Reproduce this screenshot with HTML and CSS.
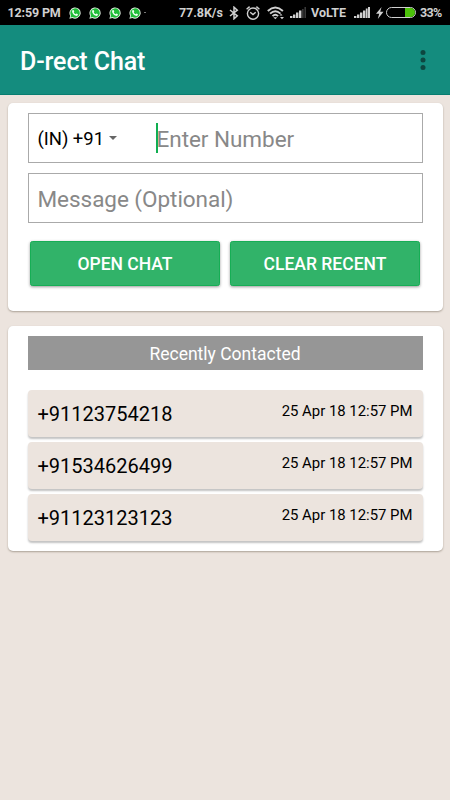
FILE: index.html
```html
<!DOCTYPE html>
<html lang="en">
<head>
<meta charset="utf-8">
<title>D-rect Chat</title>
<link rel="stylesheet" href="styles.css">
</head>
<body>
<svg class="defs" width="0" height="0">
  <defs>
    <symbol id="chat" viewBox="0 0 12 12">
      <path d="M.4 11.7 1.2 8.8A5.6 5.6 0 1 1 3.3 10.9Z" fill="#e2eee2"/>
      <path d="M1.5 10.6 2.1 8.5A4.7 4.7 0 1 1 3.6 10Z" fill="#20bd39"/>
      <path d="M3.7 3.1 4.6 3 5.3 4.7 4.7 5.5Q5.3 6.7 6.7 7.2L7.4 6.5 9 7.3Q8.9 8.8 7.5 9 4.7 8.7 3.2 5.3 2.8 4 3.7 3.1Z" fill="#f2fff2"/>
    </symbol>
    <symbol id="signal" viewBox="0 0 16 11">
      <path d="M0 9h2.4v2H0zM3 7.5h2.4V11H3zM6 5.5h2.4V11H6zM9 3.5h2.4V11H9z" fill="#d0d0d0"/>
    </symbol>
  </defs>
</svg>
<div class="status">
  <span class="clock">12:59 PM</span>
  <span class="notices">
    <svg><use href="#chat"/></svg><svg><use href="#chat"/></svg><svg><use href="#chat"/></svg><svg><use href="#chat"/></svg>
  </span>
  <i class="more-dot"></i>
  <span class="speed">77.8K/s</span>
  <svg class="bluetooth" viewBox="0 0 10 14"><path d="M1 4 8.3 9.8 5 12.8V1.2L8.3 4.2 1 10" fill="none" stroke="#d0d0d0" stroke-width="1.5"/></svg>
  <svg class="alarm" viewBox="0 0 14 14"><g fill="none" stroke="#d0d0d0" stroke-width="1.4"><circle cx="7" cy="7.6" r="5.6"/><path d="M.6 3.2 3.6.6M10.4.6 13.4 3.2M4.2 6.3 7 8.6 9.7 6.3"/></g></svg>
  <svg class="wifi" viewBox="0 0 18 14"><g fill="none" stroke="#d0d0d0" stroke-width="1.9"><path d="M.8 5Q8.3-1.8 15.9 5M3.1 7.6Q8.3 2.9 13.5 7.6M5.5 10.1Q8.3 7.4 11.1 10.1"/></g><path d="M6.3 11.2h4l-2 2zM12.5 9.6 14 7.7l1.5 1.9zM13 10.9h4L15 13.2z" fill="#d0d0d0"/></svg>
  <svg class="signal" viewBox="0 0 16 11"><use href="#signal" width="16" height="11"/><path d="M12 2h1.7v9H12zM14.4 0H16v11h-1.6z" fill="#383838"/></svg>
  <span class="volte">VoLTE</span>
  <svg class="signal" viewBox="0 0 16 11"><use href="#signal" width="16" height="11"/><path d="M11.8 1.5h1.8V11h-1.8zM14 0h2v11h-2z" fill="#d0d0d0"/></svg>
  <svg class="bolt" viewBox="0 0 8 12"><path d="M5.6 0 0 6.7h3.2L1.8 12 7.5 4.7H4.2z" fill="#d0d0d0"/></svg>
  <span class="battery"><i></i></span>
  <span class="percent">33%</span>
</div>
<header class="toolbar">
  <h1>D-rect Chat</h1>
  <svg class="menu" viewBox="0 0 6 20"><g fill="#0d4740"><circle cx="3" cy="2.5" r="2.5"/><circle cx="3" cy="10" r="2.5"/><circle cx="3" cy="17.5" r="2.5"/></g></svg>
</header>
<main>
  <section class="card compose">
    <div class="field">
      <span class="code">(IN) +91</span>
      <i class="arrow"></i>
      <i class="caret"></i>
      <span class="hint">Enter Number</span>
    </div>
    <div class="field"><span class="hint">Message (Optional)</span></div>
    <div class="actions">
      <button>OPEN CHAT</button>
      <button>CLEAR RECENT</button>
    </div>
  </section>
  <section class="card recent">
    <h2>Recently Contacted</h2>
    <ul>
      <li><span>+91123754218</span><time>25 Apr 18 12:57 PM</time></li>
      <li><span>+91534626499</span><time>25 Apr 18 12:57 PM</time></li>
      <li><span>+91123123123</span><time>25 Apr 18 12:57 PM</time></li>
    </ul>
  </section>
</main>
</body>
</html>
```
FILE: styles.css
```css
* { box-sizing: border-box; }
body {
  margin: 0;
  height: 800px;
  overflow: hidden;
  background: #ece4de;
  font-family: Roboto, "Liberation Sans", sans-serif;
  color: #000;
}
.defs { position: absolute; }
svg { display: block; flex: none; }

.status {
  display: flex;
  align-items: center;
  height: 25px;
  padding-left: 7.5px;
  background: #000;
  color: #d0d0d0;
  font-size: 12.5px;
  font-weight: 700;
  letter-spacing: -0.15px;
  line-height: 26px;
  white-space: nowrap;
}
.status span { flex: none; }
.clock { width: 61px; }
.notices { display: flex; gap: 8px; }
.notices svg { width: 12px; height: 12px; }
.more-dot { width: 2px; height: 1px; margin-left: 3.5px; background: #777; }
.speed { width: 51px; margin-left: 33px; letter-spacing: -0.05px; }
.bluetooth { width: 10px; height: 14px; margin-left: -1px; }
.alarm { width: 14px; height: 14px; margin-left: 7px; }
.wifi { width: 18px; height: 14px; margin-left: 7px; }
.signal { width: 16px; height: 11px; margin-left: 5px; }
.volte { width: 38px; margin-left: 5px; letter-spacing: 0; }
.bolt { width: 8px; height: 12px; margin-left: 6px; }
.battery {
  display: flex;
  justify-content: flex-end;
  width: 30px;
  height: 11px;
  margin-left: 2px;
  border: 1px solid #d0d0d0;
  border-radius: 6px;
  overflow: hidden;
}
.battery i { width: 10px; background: #4cc20a; }
.percent { margin-left: 4px; letter-spacing: -0.7px; }

.toolbar {
  display: flex;
  align-items: center;
  justify-content: space-between;
  height: 70px;
  padding: 3px 24.5px 0 20px;
  background: #148c7e;
  border-bottom: 1px solid #087d70;
  color: #fff;
}
h1 {
  margin: 2px 0 0;
  font-size: 25px;
  font-weight: 500;
  letter-spacing: -0.1px;
  line-height: 32px;
}
.menu { width: 6px; height: 20px; margin-top: -2px; }

main { display: flex; flex-direction: column; gap: 15px; padding: 8px 7.5px 0; }
.card {
  padding: 10px 20px 0;
  border-radius: 5px;
  background: #fff;
  box-shadow: 0 1px 2px #aaa096;
}
.compose { height: 208px; }
.field {
  display: flex;
  align-items: center;
  height: 50px;
  margin: 0 0 10px;
  padding: 2px 0 0 9px;
  border: 1px solid #aaa;
}
.code { width: 71px; font-size: 18.5px; letter-spacing: -0.05px; }
.arrow {
  border: 4px solid transparent;
  border-top-color: #666;
  border-bottom: 0;
  margin-top: -2px;
}
.caret { width: 2px; height: 30px; margin: -2px -1.5px 0 39.5px; background: #10ae51; }
.hint { color: #888; font-size: 22.5px; letter-spacing: -0.04px; line-height: 30px; }
.actions { display: flex; gap: 10px; padding: 8px 2.5px 0; }
button {
  flex: 1;
  height: 45px;
  padding: 1px 0 0;
  border: 1px solid #16ae55;
  border-radius: 2.5px;
  background: #31b369;
  box-shadow: 0 1px 3px #999;
  color: #fff;
  font: 500 17.5px Roboto, "Liberation Sans", sans-serif;
}
.recent { height: 225px; }
h2 {
  height: 34px;
  margin: 0 0 20px;
  padding-top: 1px;
  background: #969696;
  color: #fff;
  font-size: 17.5px;
  font-weight: 400;
  line-height: 34px;
  text-align: center;
}
ul { display: grid; gap: 5px; margin: 0; padding: 0; list-style: none; }
li {
  display: flex;
  justify-content: space-between;
  align-items: flex-start;
  height: 47px;
  padding: 12px 10px 0;
  border-radius: 4px;
  background: #ece4de;
  box-shadow: 0 2px 2px #c3c3c3;
}
li span { font-size: 20px; line-height: 24px; }
time { font-size: 14.9px; line-height: 18px; }
```
